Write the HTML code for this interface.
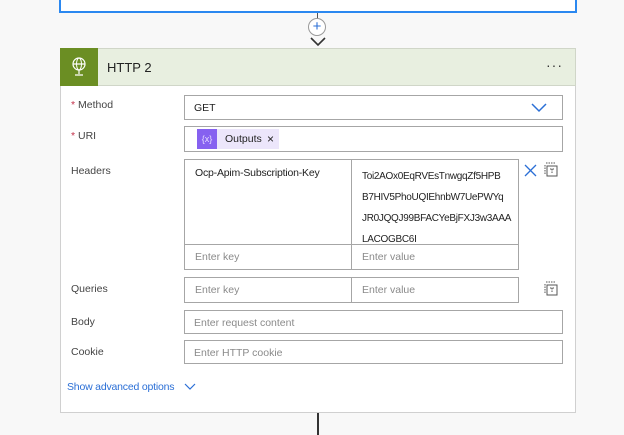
<!DOCTYPE html>
<html><head><style>
body{margin:0;width:624px;height:435px;background:#f8f8f8;font-family:"Liberation Sans",sans-serif;font-size:10.5px;color:#333;position:relative;overflow:hidden}
.a{position:absolute}
.in{position:absolute;border:1px solid #a6a6a6;background:#fff;box-sizing:border-box}
.ph{color:#8a8a8a}
.lbl{position:absolute;left:71px;color:#444}
.req{color:#c4314b}
</style></head><body>
<div class="a" style="left:59px;top:-5px;width:518px;height:18px;border:2px solid #2b88f0;border-top:none;background:#fff;box-sizing:border-box"></div>
<div class="a" style="left:317px;top:13px;width:1px;height:8px;background:#555"></div>
<div class="a" style="left:308px;top:18px;width:18px;height:18px;border:1px solid #999;border-radius:50%;background:#fff;box-sizing:border-box;color:#2b6fd6;text-align:center;line-height:15px;font-size:15px">+</div>
<svg class="a" style="left:309px;top:36px" width="18" height="11"><path d="M2 2 L9 9 L16 2" stroke="#333" stroke-width="1.6" fill="none"/></svg>
<div class="a" style="left:60px;top:48px;width:516px;height:365px;background:#fff;border:1px solid #d0d0d0;box-sizing:border-box"></div>
<div class="a" style="left:60px;top:48px;width:516px;height:38px;background:#e8efe0;border:1px solid #d0d6c8;box-sizing:border-box"></div>
<div class="a" style="left:60px;top:48px;width:38px;height:38px;background:#6b8e23"></div>
<svg class="a" style="left:70px;top:56px" width="18" height="22"><circle cx="9" cy="8" r="6" stroke="#fff" stroke-width="1.2" fill="none"/><ellipse cx="9" cy="8" rx="2.5" ry="6" stroke="#fff" stroke-width="1" fill="none"/><path d="M3 8H15M9 14V18M5 19H13" stroke="#fff" stroke-width="1.2"/></svg>
<div class="a" style="left:107px;top:60px;font-size:13px;color:#222">HTTP 2</div>
<div class="a" style="left:546px;top:57px;font-size:14px;letter-spacing:1px;color:#333">···</div>

<div class="lbl" style="top:99px"><span class="req">*</span> Method</div>
<div class="in" style="left:184px;top:95px;width:379px;height:25px"><span class="a" style="left:9px;top:6px;color:#222">GET</span>
<svg class="a" style="left:346px;top:7px" width="16" height="10"><path d="M1 1 L8 8 L15 1" stroke="#2b6fd6" stroke-width="1.5" fill="none"/></svg></div>
<div class="lbl" style="top:130px"><span class="req">*</span> URI</div>
<div class="in" style="left:184px;top:126px;width:379px;height:26px">
<div class="a" style="left:12px;top:2px;width:82px;height:20px;background:#ece6fb"></div>
<div class="a" style="left:12px;top:2px;width:20px;height:20px;background:#8661f0;color:#e6dcff;font-size:9px;text-align:center;line-height:20px">{x}</div>
<span class="a" style="left:40px;top:6px;color:#222">Outputs</span><span class="a" style="left:82px;top:5px;color:#222;font-size:12px">×</span></div>

<div class="lbl" style="top:165px">Headers</div>
<div class="in" style="left:184px;top:159px;width:168px;height:86px"><span class="a" style="left:10px;top:7px;color:#222;letter-spacing:-0.2px">Ocp-Apim-Subscription-Key</span></div>
<div class="in" style="left:351px;top:159px;width:168px;height:86px"><div class="a" style="left:10px;top:6px;line-height:21px;color:#222;font-size:10px;letter-spacing:-0.3px">Toi2AOx0EqRVEsTnwgqZf5HPB<br>B7HIV5PhoUQIEhnbW7UePWYq<br>JR0JQQJ99BFACYeBjFXJ3w3AAA<br>LACOGBC6I</div></div>
<div class="in" style="left:184px;top:244px;width:168px;height:26px"><span class="a ph" style="left:10px;top:6px">Enter key</span></div>
<div class="in" style="left:351px;top:244px;width:168px;height:26px"><span class="a ph" style="left:10px;top:6px">Enter value</span></div>
<svg class="a" style="left:524px;top:164px" width="13" height="13"><path d="M1 1L12 12M12 1L1 12" stroke="#2b6fd6" stroke-width="1.3"/></svg>
<svg class="a" style="left:544px;top:162px" width="14" height="15"><rect x="3" y="4" width="10" height="10" stroke="#555" fill="none"/><path d="M1 3V12M2 1H11M6 7H10M8 7V12" stroke="#555" stroke-dasharray="1.5 1" fill="none"/></svg>

<div class="lbl" style="top:283px">Queries</div>
<div class="in" style="left:184px;top:277px;width:168px;height:26px"><span class="a ph" style="left:10px;top:6px">Enter key</span></div>
<div class="in" style="left:351px;top:277px;width:168px;height:26px"><span class="a ph" style="left:10px;top:6px">Enter value</span></div>
<svg class="a" style="left:544px;top:281px" width="14" height="15"><rect x="3" y="4" width="10" height="10" stroke="#555" fill="none"/><path d="M1 3V12M2 1H11M6 7H10M8 7V12" stroke="#555" stroke-dasharray="1.5 1" fill="none"/></svg>

<div class="lbl" style="top:316px">Body</div>
<div class="in" style="left:184px;top:310px;width:379px;height:24px"><span class="a ph" style="left:9px;top:6px">Enter request content</span></div>
<div class="lbl" style="top:346px">Cookie</div>
<div class="in" style="left:184px;top:340px;width:379px;height:24px"><span class="a ph" style="left:9px;top:6px">Enter HTTP cookie</span></div>

<div class="a" style="left:67px;top:381px;color:#2b6fd6;font-size:10.5px;letter-spacing:-0.2px">Show advanced options</div>
<svg class="a" style="left:184px;top:383px" width="12" height="8"><path d="M1 1L6 6L11 1" stroke="#2b6fd6" stroke-width="1.2" fill="none"/></svg>
<div class="a" style="left:317px;top:413px;width:2px;height:22px;background:#333"></div>
</body></html>
